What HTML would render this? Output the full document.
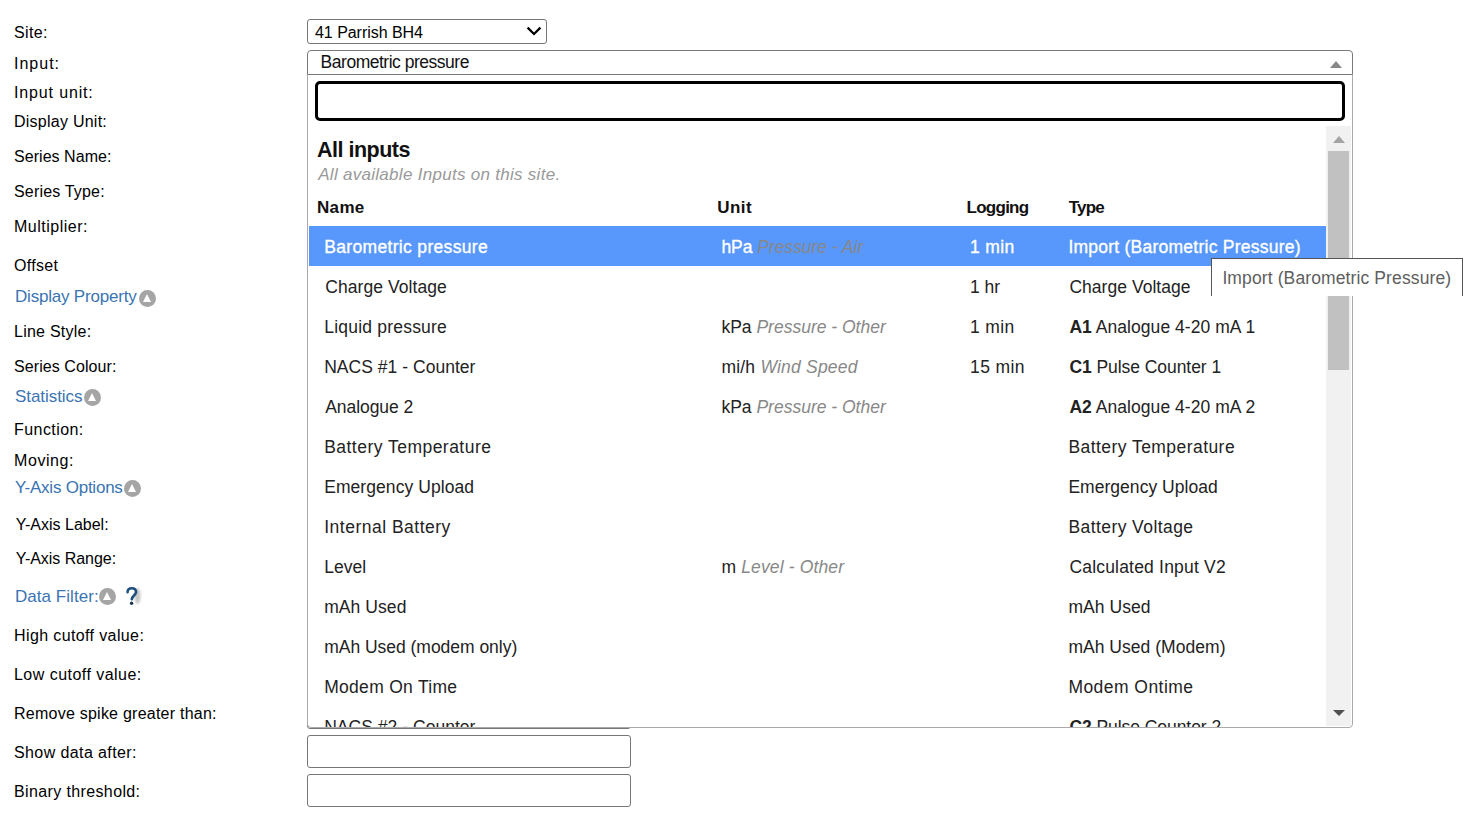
<!DOCTYPE html>
<html><head><meta charset="utf-8"><style>
html,body{margin:0;padding:0;background:#fff;width:1481px;height:839px;overflow:hidden;position:relative}
body{font-family:"Liberation Sans",sans-serif}
.t{position:absolute;white-space:nowrap;line-height:1}
.t i{color:#888;font-style:italic;-webkit-text-stroke:0}
.t b{font-weight:bold}
.ic{position:absolute;width:17px;height:17px;margin:0.5px 0 0 0.5px;border-radius:50%;background:#a5a5a5;filter:blur(0.3px)}
.ic:after{content:"";position:absolute;left:4px;top:4px;border-left:4.5px solid transparent;border-right:4.5px solid transparent;border-bottom:8px solid #fff}
.sel{position:absolute;left:307px;top:19px;width:238px;height:23px;border:1px solid #767676;border-radius:3px;background:#fff}
.inp{position:absolute;left:307px;width:322px;height:31px;border:1px solid #767676;border-radius:3px;background:#fff}
.hid{position:absolute;left:307px;top:700px;width:322px;height:27px;border:1px solid #767676;border-radius:3px}
.frame{position:absolute;left:307px;top:74px;width:1044px;height:652px;border:1px solid #aaa;border-radius:0 0 4px 4px;background:#fff}
.hdrb{position:absolute;left:307px;top:50px;width:1044px;height:23px;border:1px solid #7a7a7a;border-radius:4px 4px 0 0;background:#fff}
.search{position:absolute;left:315px;top:81px;width:1024px;height:34px;border:3px solid #000;border-radius:5px}
.scroll{position:absolute;left:308px;top:126px;width:1044px;height:601px;overflow:hidden}
.scroll .t{margin-left:-308px;margin-top:-126px}
.track{position:absolute;left:1018px;top:0;width:25px;height:600px;background:#f1f1f1}
.thumb{position:absolute;left:2px;top:25px;width:21px;height:219px;background:#c1c1c1}
.hl{position:absolute;left:1px;top:100px;width:1017px;height:40px;background:#5897fb}
.arr{position:absolute;width:0;height:0;border-left:6px solid transparent;border-right:6px solid transparent}
.arr.up{border-bottom:7px solid #888}
.arr.dn{border-top:6.5px solid #505050}
.tipw{position:absolute;left:0;top:0;width:1481px;height:296px;overflow:hidden}
.tip{position:absolute;left:1211px;top:258px;width:250px;height:40px;border:1px solid #555;background:#fff}
.qm{position:absolute;left:125px;top:587px;font:bold 20px "Liberation Sans";color:#1d3c5e;line-height:1;text-shadow:1px 1px 1px #bbb}
</style></head><body>
<div class="t" style="left:14.00px;top:25px;font-size:16px;color:#000;letter-spacing:0.375px;font-weight:normal;font-style:normal;">Site:</div><div class="t" style="left:14.00px;top:56px;font-size:16px;color:#000;letter-spacing:1.000px;font-weight:normal;font-style:normal;">Input:</div><div class="t" style="left:14.00px;top:85px;font-size:16px;color:#000;letter-spacing:0.850px;font-weight:normal;font-style:normal;">Input unit:</div><div class="t" style="left:14.00px;top:114px;font-size:16px;color:#000;letter-spacing:0.250px;font-weight:normal;font-style:normal;">Display Unit:</div><div class="t" style="left:14.00px;top:149px;font-size:16px;color:#000;letter-spacing:0.045px;font-weight:normal;font-style:normal;">Series Name:</div><div class="t" style="left:14.00px;top:184px;font-size:16px;color:#000;letter-spacing:0.182px;font-weight:normal;font-style:normal;">Series Type:</div><div class="t" style="left:14.00px;top:219px;font-size:16px;color:#000;letter-spacing:0.500px;font-weight:normal;font-style:normal;">Multiplier:</div><div class="t" style="left:14.00px;top:258px;font-size:16px;color:#000;letter-spacing:0.300px;font-weight:normal;font-style:normal;">Offset</div><div class="t" style="left:14.00px;top:324px;font-size:16px;color:#000;letter-spacing:0.250px;font-weight:normal;font-style:normal;">Line Style:</div><div class="t" style="left:14.00px;top:359px;font-size:16px;color:#000;letter-spacing:0.077px;font-weight:normal;font-style:normal;">Series Colour:</div><div class="t" style="left:14.00px;top:422px;font-size:16px;color:#000;letter-spacing:0.438px;font-weight:normal;font-style:normal;">Function:</div><div class="t" style="left:14.00px;top:453px;font-size:16px;color:#000;letter-spacing:0.583px;font-weight:normal;font-style:normal;">Moving:</div><div class="t" style="left:15.80px;top:517px;font-size:16px;color:#000;letter-spacing:-0.000px;font-weight:normal;font-style:normal;">Y-Axis Label:</div><div class="t" style="left:15.80px;top:551px;font-size:16px;color:#000;letter-spacing:-0.042px;font-weight:normal;font-style:normal;">Y-Axis Range:</div><div class="t" style="left:14.00px;top:628px;font-size:16px;color:#000;letter-spacing:0.383px;font-weight:normal;font-style:normal;">High cutoff value:</div><div class="t" style="left:14.00px;top:667px;font-size:16px;color:#000;letter-spacing:0.469px;font-weight:normal;font-style:normal;">Low cutoff value:</div><div class="t" style="left:14.00px;top:706px;font-size:16px;color:#000;letter-spacing:0.240px;font-weight:normal;font-style:normal;">Remove spike greater than:</div><div class="t" style="left:14.00px;top:745px;font-size:16px;color:#000;letter-spacing:0.400px;font-weight:normal;font-style:normal;">Show data after:</div><div class="t" style="left:14.00px;top:784px;font-size:16px;color:#000;letter-spacing:0.375px;font-weight:normal;font-style:normal;">Binary threshold:</div><div class="t" style="left:15.00px;top:288px;font-size:17px;color:#3a74b2;letter-spacing:-0.200px;font-weight:normal;font-style:normal;">Display Property</div><div class="t" style="left:15.00px;top:388px;font-size:17px;color:#3a74b2;letter-spacing:-0.056px;font-weight:normal;font-style:normal;">Statistics</div><div class="t" style="left:15.00px;top:479px;font-size:17px;color:#3a74b2;letter-spacing:-0.231px;font-weight:normal;font-style:normal;">Y-Axis Options</div><div class="t" style="left:15.00px;top:588px;font-size:17px;color:#3a74b2;letter-spacing:0.045px;font-weight:normal;font-style:normal;">Data Filter:</div>
<div class="ic" style="left:138.5px;top:289.5px"></div><div class="ic" style="left:83px;top:388.6px"></div><div class="ic" style="left:123.5px;top:479.3px"></div><div class="ic" style="left:98.7px;top:587.9px"></div>
<svg style="position:absolute;left:122px;top:584px" width="24" height="26" viewBox="0 0 24 26"><defs><filter id="bl" x="-50%" y="-50%" width="200%" height="200%"><feGaussianBlur stdDeviation="1.3"/></filter></defs><ellipse cx="15.5" cy="12" rx="3" ry="8" fill="#c8c8c8" filter="url(#bl)"/><path d="M5.6 8.2 C5.4 5.6 7.2 4.2 9.8 4.2 C12.6 4.2 14.1 5.8 14.1 8 C14.1 10.8 10.4 11.6 9.8 15.2" fill="none" stroke="#1f4f7e" stroke-width="2.6" stroke-linecap="round"/><circle cx="9.6" cy="19.2" r="1.7" fill="#1a3550"/></svg>
<div class="sel"><svg style="position:absolute;left:217.5px;top:6.2px" width="16" height="10" viewBox="0 0 16 10"><path d="M1.6 1.6 L8 8 L14.4 1.6" fill="none" stroke="#000" stroke-width="2.2"/></svg></div>
<div class="t" style="left:315.00px;top:25px;font-size:16px;color:#000;letter-spacing:-0.038px;font-weight:normal;font-style:normal;">41 Parrish BH4</div>
<div class="hid"></div>
<div class="inp" style="top:735px"></div>
<div class="inp" style="top:774px"></div>
<div class="frame"></div>
<div class="hdrb"><div class="arr up" style="left:1022px;top:10px;border-bottom-color:#888"></div></div>
<div class="t" style="left:320.60px;top:54px;font-size:17.5px;color:#111;letter-spacing:-0.483px;font-weight:normal;font-style:normal;">Barometric pressure</div>
<div class="search"></div>
<div class="scroll">
 <div class="hl"></div>
 <div class="t" style="left:317.00px;top:140px;font-size:21.5px;color:#111;letter-spacing:-0.500px;font-weight:bold;font-style:normal;">All inputs</div><div class="t" style="left:318.20px;top:166px;font-size:17px;color:#999;letter-spacing:0.288px;font-weight:normal;font-style:italic;">All available Inputs on this site.</div><div class="t" style="left:317.00px;top:199px;font-size:17px;color:#111;letter-spacing:0.333px;font-weight:bold;font-style:normal;">Name</div><div class="t" style="left:717.20px;top:199px;font-size:17px;color:#111;letter-spacing:0.500px;font-weight:bold;font-style:normal;">Unit</div><div class="t" style="left:966.60px;top:199px;font-size:17px;color:#111;letter-spacing:-0.750px;font-weight:bold;font-style:normal;">Logging</div><div class="t" style="left:1068.80px;top:199px;font-size:17px;color:#111;letter-spacing:-0.833px;font-weight:bold;font-style:normal;">Type</div>
 <div class="t" style="left:324.20px;top:239px;font-size:17.5px;color:#fff;letter-spacing:0.333px;font-weight:normal;font-style:normal;-webkit-text-stroke:0.35px #fff;">Barometric pressure</div><div class="t" style="left:721.40px;top:239px;font-size:17.5px;color:#fff;letter-spacing:-0.029px;font-weight:normal;font-style:normal;-webkit-text-stroke:0.35px #fff;">hPa <i>Pressure - Air</i></div><div class="t" style="left:970.00px;top:239px;font-size:17.5px;color:#fff;letter-spacing:0.375px;font-weight:normal;font-style:normal;-webkit-text-stroke:0.35px #fff;">1 min</div><div class="t" style="left:1068.40px;top:239px;font-size:17.5px;color:#fff;letter-spacing:0.241px;font-weight:normal;font-style:normal;-webkit-text-stroke:0.35px #fff;">Import (Barometric Pressure)</div><div class="t" style="left:325.20px;top:279px;font-size:17.5px;color:#222;letter-spacing:0.077px;font-weight:normal;font-style:normal;">Charge Voltage</div><div class="t" style="left:970.00px;top:279px;font-size:17.5px;color:#222;letter-spacing:0.000px;font-weight:normal;font-style:normal;">1 hr</div><div class="t" style="left:1069.40px;top:279px;font-size:17.5px;color:#222;letter-spacing:0.038px;font-weight:normal;font-style:normal;">Charge Voltage</div><div class="t" style="left:324.20px;top:319px;font-size:17.5px;color:#222;letter-spacing:0.214px;font-weight:normal;font-style:normal;">Liquid pressure</div><div class="t" style="left:721.40px;top:319px;font-size:17.5px;color:#222;letter-spacing:-0.000px;font-weight:normal;font-style:normal;">kPa <i>Pressure - Other</i></div><div class="t" style="left:970.00px;top:319px;font-size:17.5px;color:#222;letter-spacing:0.375px;font-weight:normal;font-style:normal;">1 min</div><div class="t" style="left:1069.40px;top:319px;font-size:17.5px;color:#222;letter-spacing:0.050px;font-weight:normal;font-style:normal;"><b>A1</b> Analogue 4-20 mA 1</div><div class="t" style="left:324.20px;top:359px;font-size:17.5px;color:#222;letter-spacing:0.031px;font-weight:normal;font-style:normal;">NACS #1 - Counter</div><div class="t" style="left:721.40px;top:359px;font-size:17.5px;color:#222;letter-spacing:0.214px;font-weight:normal;font-style:normal;">mi/h <i>Wind Speed</i></div><div class="t" style="left:970.00px;top:359px;font-size:17.5px;color:#222;letter-spacing:0.400px;font-weight:normal;font-style:normal;">15 min</div><div class="t" style="left:1069.40px;top:359px;font-size:17.5px;color:#222;letter-spacing:-0.059px;font-weight:normal;font-style:normal;"><b>C1</b> Pulse Counter 1</div><div class="t" style="left:325.20px;top:399px;font-size:17.5px;color:#222;letter-spacing:-0.056px;font-weight:normal;font-style:normal;">Analogue 2</div><div class="t" style="left:721.40px;top:399px;font-size:17.5px;color:#222;letter-spacing:-0.000px;font-weight:normal;font-style:normal;">kPa <i>Pressure - Other</i></div><div class="t" style="left:1069.40px;top:399px;font-size:17.5px;color:#222;letter-spacing:0.050px;font-weight:normal;font-style:normal;"><b>A2</b> Analogue 4-20 mA 2</div><div class="t" style="left:324.20px;top:439px;font-size:17.5px;color:#222;letter-spacing:0.472px;font-weight:normal;font-style:normal;">Battery Temperature</div><div class="t" style="left:1068.40px;top:439px;font-size:17.5px;color:#222;letter-spacing:0.445px;font-weight:normal;font-style:normal;">Battery Temperature</div><div class="t" style="left:324.20px;top:479px;font-size:17.5px;color:#222;letter-spacing:0.067px;font-weight:normal;font-style:normal;">Emergency Upload</div><div class="t" style="left:1068.40px;top:479px;font-size:17.5px;color:#222;letter-spacing:0.034px;font-weight:normal;font-style:normal;">Emergency Upload</div><div class="t" style="left:324.20px;top:519px;font-size:17.5px;color:#222;letter-spacing:0.500px;font-weight:normal;font-style:normal;">Internal Battery</div><div class="t" style="left:1068.40px;top:519px;font-size:17.5px;color:#222;letter-spacing:0.428px;font-weight:normal;font-style:normal;">Battery Voltage</div><div class="t" style="left:324.20px;top:559px;font-size:17.5px;color:#222;letter-spacing:0.000px;font-weight:normal;font-style:normal;">Level</div><div class="t" style="left:721.40px;top:559px;font-size:17.5px;color:#222;letter-spacing:0.143px;font-weight:normal;font-style:normal;">m <i>Level - Other</i></div><div class="t" style="left:1069.40px;top:559px;font-size:17.5px;color:#222;letter-spacing:0.195px;font-weight:normal;font-style:normal;">Calculated Input V2</div><div class="t" style="left:324.20px;top:599px;font-size:17.5px;color:#222;letter-spacing:0.071px;font-weight:normal;font-style:normal;">mAh Used</div><div class="t" style="left:1068.40px;top:599px;font-size:17.5px;color:#222;letter-spacing:0.071px;font-weight:normal;font-style:normal;">mAh Used</div><div class="t" style="left:324.20px;top:639px;font-size:17.5px;color:#222;letter-spacing:-0.025px;font-weight:normal;font-style:normal;">mAh Used (modem only)</div><div class="t" style="left:1068.40px;top:639px;font-size:17.5px;color:#222;letter-spacing:0.033px;font-weight:normal;font-style:normal;">mAh Used (Modem)</div><div class="t" style="left:324.20px;top:679px;font-size:17.5px;color:#222;letter-spacing:0.292px;font-weight:normal;font-style:normal;">Modem On Time</div><div class="t" style="left:1068.40px;top:679px;font-size:17.5px;color:#222;letter-spacing:0.455px;font-weight:normal;font-style:normal;">Modem Ontime</div><div class="t" style="left:324.20px;top:719px;font-size:17.5px;color:#222;letter-spacing:0.031px;font-weight:normal;font-style:normal;">NACS #2 - Counter</div><div class="t" style="left:1069.40px;top:719px;font-size:17.5px;color:#222;letter-spacing:-0.059px;font-weight:normal;font-style:normal;"><b>C2</b> Pulse Counter 2</div>
 <div class="track"><div class="thumb"></div><div class="arr up" style="left:7px;top:10px;border-bottom-color:#a3a3a3"></div><div class="arr dn" style="left:7px;top:584px;border-top-color:#505050"></div></div>
</div>
<div class="tipw"><div class="tip"></div><div class="t" style="left:1222.40px;top:270px;font-size:17.5px;color:#5e5e5e;letter-spacing:0.115px;font-weight:normal;font-style:normal;">Import (Barometric Pressure)</div></div>
</body></html>
